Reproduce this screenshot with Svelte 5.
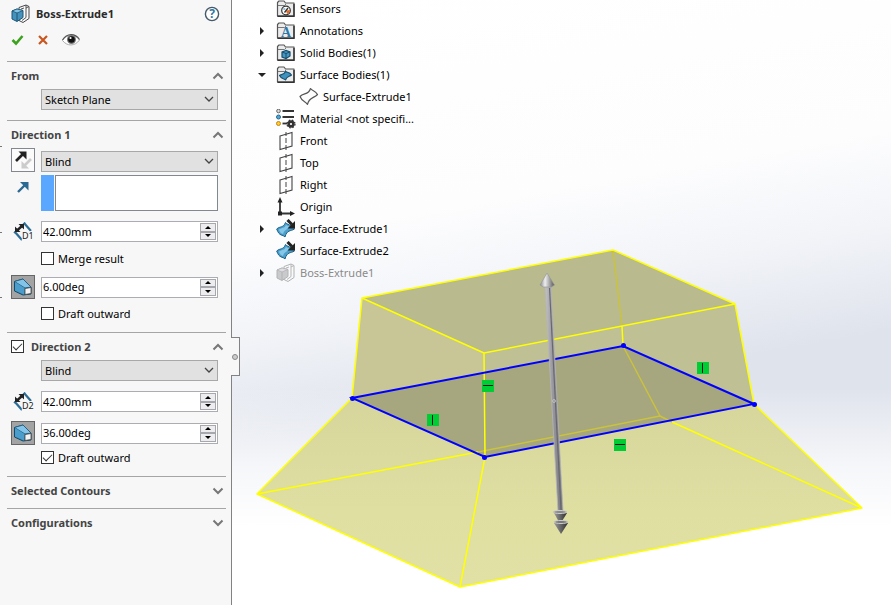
<script>
  const features = [
    { kind: 'sensor', label: 'Sensors' },
    { kind: 'note', label: 'Annotations', arrow: 'closed' },
    { kind: 'solid', label: 'Solid Bodies(1)', arrow: 'closed' },
    { kind: 'surfaces', label: 'Surface Bodies(1)', arrow: 'open' },
    { kind: 'outline', label: 'Surface-Extrude1', child: true },
    { kind: 'material', label: 'Material <not specifi...' },
    { kind: 'plane', label: 'Front' },
    { kind: 'plane', label: 'Top' },
    { kind: 'plane', label: 'Right' },
    { kind: 'origin', label: 'Origin' },
    { kind: 'surface', label: 'Surface-Extrude1', arrow: 'closed' },
    { kind: 'surface', label: 'Surface-Extrude2' },
    { kind: 'boss', label: 'Boss-Extrude1', arrow: 'closed', dim: true }
  ];

  let open = $state({ from: true, d1: true, d2: true, contours: false, config: false });
  let values = $state({ depth1: '42.00mm', draft1: '6.00deg', depth2: '42.00mm', draft2: '36.00deg' });

  function step(key, delta) {
    const unit = values[key].replace(/[\d.-]/g, '');
    values[key] = (parseFloat(values[key]) + delta).toFixed(2) + unit;
  }
</script>

{#snippet bossIcon()}
  <svg width="20" height="20" viewBox="0 0 20 20" aria-hidden="true">
    <path d="M8 3.500l7-2.500 3 1.500v12l-6 4-4-2z" fill="#fafafa" stroke="#474747" stroke-linejoin="round" />
    <path d="M15 1v12.500l-4 3M15 4l3-1.500M10 5l3-1" fill="none" stroke="#555" />
    <path d="M1 7l5-2 6 1.500v7l-6 4-5-2.500z" fill="#4593bd" stroke="#1c5475" stroke-linejoin="round" />
    <path d="M1 7l5 2 6-2.500L6 5z" fill="#86c4e6" stroke="#1c5475" stroke-width=".8" />
    <path d="M6 9v8" stroke="#1c5475" />
  </svg>
{/snippet}

{#snippet toggle(key, label)}
  <button class="chevron" aria-label="Toggle {label}" aria-expanded={open[key]} onclick={() => (open[key] = !open[key])}>
    <svg width="12" height="8" viewBox="0 0 12 8" aria-hidden="true">
      <path d={open[key] ? 'M1.500 6.500L6 2l4.500 4.500' : 'M1.500 1.500L6 6l4.500-4.500'} fill="none" stroke="#777" stroke-width="2" />
    </svg>
  </button>
{/snippet}

{#snippet combo(id, label, options)}
  <div class="combo">
    <select {id} aria-label={label}>
      {#each options as option}<option>{option}</option>{/each}
    </select>
    <svg width="10" height="7" viewBox="0 0 10 7" aria-hidden="true"><path d="M1 1l4 4 4-4" fill="none" stroke="#444" stroke-width="1.300" /></svg>
  </div>
{/snippet}

{#snippet spin(key, label)}
  <div class="spin">
    <input type="text" aria-label={label} bind:value={values[key]} />
    <div class="steps">
      <button aria-label="Increase {label}" onclick={() => step(key, 1)}><svg width="6" height="3" viewBox="0 0 6 3"><path d="M0 3l3-3 3 3z" /></svg></button>
      <button aria-label="Decrease {label}" onclick={() => step(key, -1)}><svg width="6" height="3" viewBox="0 0 6 3"><path d="M0 0l3 3 3-3z" /></svg></button>
    </div>
  </div>
{/snippet}

{#snippet depthIcon(n)}
  <svg class="depth" width="22" height="20" viewBox="0 0 22 20" aria-hidden="true">
    <path d="M11 1l7 8M1.500 9.500L9 18" fill="none" stroke="#2d6d96" stroke-width="2.200" />
    <path d="M10 2.500l2-2M1 11l2-2" stroke="#2d6d96" stroke-width="1.500" />
    <path d="M4 8.500L9 4" stroke="#222" stroke-width="2.400" />
    <path d="M5.500 2h5.500v5.500zM2 4.500V10h5.500z" fill="#222" />
    <text x="9" y="17" font-size="9" stroke="#f7f7f7" stroke-width="2" paint-order="stroke" fill="#222">D{n}</text>
  </svg>
{/snippet}

{#snippet draftButton()}
  <button class="tool pressed" aria-label="Draft on/off">
    <svg width="20" height="20" viewBox="0 0 20 20" aria-hidden="true">
      <path d="M1.500 4.500L10 2l8 8v7l-8 1-8.500-4z" fill="#2f7faa" stroke="#164a68" stroke-linejoin="round" />
      <path d="M1.500 4.500L10 2l8 8-6 1z" fill="#83c4e8" stroke="#1c5878" stroke-width=".8" />
      <path d="M2 5l9.500 6-.5 6.500-9-4z" fill="#4b9ecb" />
      <path d="M12 11.500l6-1v6L12 17.500z" fill="#f4f4f4" stroke="#444" stroke-width=".8" />
    </svg>
  </button>
{/snippet}

{#snippet treeIcon(kind)}
  <svg width="20" height="20" viewBox="0 0 20 20" aria-hidden="true">
    {#if ['sensor', 'note', 'solid', 'surfaces'].includes(kind)}
      <path d="M1.500 17V3.500L3 2h5l1.500 2H18v13z" fill="#ececec" stroke="#555" stroke-width="1.200" stroke-linejoin="round" />
      <path d="M2 6.500h6.500L10 5" fill="none" stroke="#777" />
      <path d="M1.500 17.300H18V5" fill="none" stroke="#333" stroke-width="1.400" />
    {/if}
    {#if kind === 'sensor'}
      <circle cx="10" cy="11.500" r="4.300" fill="#fff" stroke="#333" stroke-width="1.200" />
      <path d="M10 11.500l4-.5a4.300 4.300 0 0 1-3 4z" fill="#e06a28" />
      <path d="M8.500 13.500L12 9" stroke="#333" stroke-width="1.300" />
      <path d="M7.300 10h2" stroke="#2d7fb0" />
    {:else if kind === 'note'}
      <text x="10" y="16" text-anchor="middle" font-family="Liberation Serif, serif" font-size="14" font-weight="700" fill="#2f79a8">A</text>
    {:else if kind === 'solid'}
      <path d="M6 9l4-1.500L14 9v4l-4 2.500L6 14z" fill="#4797c2" stroke="#174f6e" stroke-width="1.200" />
      <path d="M6 9l4 1.500L14 9M10 10.500v5" fill="none" stroke="#174f6e" />
    {:else if kind === 'surfaces'}
      <path d="M3.500 10.500C5 9 8 10.500 9.500 6.500c1.500 1.200 4 .3 6 3.500-2 2-4.500.5-6 5-1.500-2-4-.5-6-4.500z" fill="#3e93c1" stroke="#174f6e" stroke-width="1.100" stroke-linejoin="round" />
    {:else if kind === 'outline'}
      <path d="M1 9.500C4.500 5.500 9.500 8.500 11.500 1.500c2 3 4.500 1.500 7 6C15 11.500 10 10 8.500 17.500 6.500 14 3.500 15.500 1 9.500z" fill="#fdfdfd" stroke="#555" stroke-width="1.200" stroke-linejoin="round" />
    {:else if kind === 'material'}
      <path d="M6.500 2H18M6.500 8H18" stroke="#333" stroke-width="1.800" />
      <path d="M6.500 14.500H11" stroke="#333" stroke-width="1.800" />
      <circle cx="2.500" cy="2" r="1.800" fill="#ddd" stroke="#666" />
      <circle cx="2.500" cy="8" r="2" fill="#4ba7dc" stroke="#28688e" />
      <circle cx="2.500" cy="14.500" r="2" fill="#ffd11d" stroke="#c2801e" />
      <circle cx="15" cy="15" r="2.400" fill="#fff" stroke="#333" stroke-width="2.600" />
      <circle cx="15" cy="15" r="4" fill="none" stroke="#333" stroke-width="1.200" stroke-dasharray="1.600 1.600" />
    {:else if kind === 'plane'}
      <path d="M4 5l12-3.500v13.500L4 18.500z" fill="none" stroke="#444" stroke-width="1.100" /><path d="M10 1v4M10 7v5M10 14v5" stroke="#444" />
    {:else if kind === 'origin'}
      <path d="M4 4v12.500h12" fill="none" stroke="#333" stroke-width="1.800" />
      <path d="M1.500 5.500L4 0l2.500 5.500zM14 14l5 2.500-5 2.500zM2 14.500h4v4H2z" fill="#222" />
    {:else if kind === 'surface'}
      <path d="M.7 10C4 7 7.500 9 9.500 3.500c2 2.500 4.500 1.500 9 6.500-4 2.500-7.500.5-9.500 8-2.500-3-5.500 0-8.300-8z" fill="#4a9fcd" stroke="#1e6186" stroke-linejoin="round" />
      <path d="M3 10.500c3-2 5.500-1 7-4.500l3 1.500c-1.500 4-4.500 2.500-6 7.500-1.500-.5-3-1-4-4.500z" fill="#86c6e6" />
      <path d="M11.500 1L16 5.500" stroke="#222" stroke-width="3" />
      <path d="M19 2v7.500h-7.500z" fill="#222" />
    {/if}
  </svg>
{/snippet}

<main>
  <aside class="panel">
    <i class="tick t1"></i><i class="tick t2"></i><i class="tick t3"></i>
    <header>
      <div class="title">
        {@render bossIcon()}
        <h1>Boss-Extrude1</h1>
        <button class="plain help" aria-label="Help">
          <svg width="16" height="16" viewBox="0 0 16 16">
            <circle cx="8" cy="8" r="6.600" fill="#fff" stroke="#455a68" stroke-width="1.400" />
            <text x="8" y="12" text-anchor="middle" font-size="12" font-weight="700" fill="#2d77a5">?</text>
          </svg>
        </button>
      </div>
      <div class="actions">
        <button class="plain" aria-label="OK"><svg width="13" height="12" viewBox="0 0 13 12"><path d="M1.500 6l3.500 3.500L11.500 2" fill="none" stroke="#3da21f" stroke-width="2.600" /></svg></button>
        <button class="plain" aria-label="Cancel"><svg width="10" height="10" viewBox="0 0 10 10"><path d="M1 1l8 8M9 1L1 9" stroke="#c9551f" stroke-width="2.200" /></svg></button>
        <button class="plain" aria-label="Preview">
          <svg width="18" height="14" viewBox="0 0 18 14">
            <path d="M.5 7.500C5 .5 13 .5 17.500 7 13 13.500 5 13.500.5 7.500z" fill="#fff" stroke="#aaa" />
            <path d="M.5 7C5 0 13 0 17.500 6.500" fill="none" stroke="#555" stroke-width="1.200" />
            <circle cx="9.500" cy="6.500" r="4.500" fill="#777" /><circle cx="9.500" cy="6.500" r="3.300" fill="#111" /><circle cx="8.500" cy="5" r="1.100" fill="#fff" />
          </svg>
        </button>
      </div>
    </header>

    <section>
      <div class="head"><h2>From</h2>{@render toggle('from', 'From')}</div>
      {#if open.from}
        <div class="body tight"><div class="row"><span></span>{@render combo('from', 'Start condition', ['Sketch Plane', 'Offset'])}</div></div>
      {/if}
    </section>

    <section>
      <div class="head"><h2>Direction 1</h2>{@render toggle('d1', 'Direction 1')}</div>
      {#if open.d1}
        <div class="body">
          <div class="row end">
            <button class="tool" aria-label="Reverse direction">
              <svg width="20" height="20" viewBox="0 0 20 20">
                <path d="M18 9l-7 7" stroke="#ccc" stroke-width="2.600" /><path d="M8.500 11v7.500H16z" fill="#ccc" />
                <path d="M3 11l7-7" stroke="#222" stroke-width="2.600" /><path d="M5.500 1.500H13.500V9.500z" fill="#222" />
              </svg>
            </button>
            {@render combo('end1', 'End condition 1', ['Blind', 'Through All'])}
          </div>
          <div class="row vector">
            <svg width="14" height="14" viewBox="0 0 14 14" aria-hidden="true"><path d="M2 12l7-7" stroke="#2b6a92" stroke-width="2.400" /><path d="M4 2h8.500v8.500z" fill="#2b6a92" /></svg>
            <div class="pick"><i></i><input type="text" aria-label="Direction of extrusion" /></div>
          </div>
          <div class="row g10">{@render depthIcon(1)}{@render spin('depth1', 'Depth 1')}</div>
          <div class="row g10"><span></span><label><input type="checkbox" />Merge result</label></div>
          <div class="row g10">{@render draftButton()}{@render spin('draft1', 'Draft angle 1')}</div>
          <div class="row g8"><span></span><label><input type="checkbox" />Draft outward</label></div>
        </div>
      {/if}
    </section>

    <section>
      <div class="head"><input id="dir2" type="checkbox" checked /><h2><label for="dir2">Direction 2</label></h2>{@render toggle('d2', 'Direction 2')}</div>
      {#if open.d2}
        <div class="body">
          <div class="row"><span></span>{@render combo('end2', 'End condition 2', ['Blind', 'Through All'])}</div>
          <div class="row g10">{@render depthIcon(2)}{@render spin('depth2', 'Depth 2')}</div>
          <div class="row g9">{@render draftButton()}{@render spin('draft2', 'Draft angle 2')}</div>
          <div class="row g6"><span></span><label><input type="checkbox" checked />Draft outward</label></div>
        </div>
      {/if}
    </section>

    <section class="closed"><div class="head"><h2>Selected Contours</h2>{@render toggle('contours', 'Selected Contours')}</div></section>
    <section class="closed"><div class="head"><h2>Configurations</h2>{@render toggle('config', 'Configurations')}</div></section>
    <button class="grip" aria-label="Collapse panel"><i></i></button>
  </aside>

  <div class="view">
    <svg class="scene" viewBox="232 0 659 605" preserveAspectRatio="xMinYMin meet" role="img" aria-label="Extrude preview">
      <defs>
        <linearGradient id="shaft" x1="0" x2="1"><stop offset="0" stop-color="#c4c4c8" /><stop offset=".4" stop-color="#9a9aa0" /><stop offset="1" stop-color="#75757a" /></linearGradient>
        <linearGradient id="cone" x1="0" x2="1"><stop offset="0" stop-color="#888" /><stop offset=".35" stop-color="#eee" /><stop offset="1" stop-color="#555" /></linearGradient>
        <linearGradient id="dark" x1="0" x2="1"><stop offset="0" stop-color="#999" /><stop offset=".5" stop-color="#666" /><stop offset="1" stop-color="#2c2c2c" /></linearGradient>
        <linearGradient id="skirt" x1="0" x2="0" y1="0" y2="1"><stop offset="0" stop-color="#d6d69c" /><stop offset=".6" stop-color="#dfdfa2" /><stop offset="1" stop-color="#e2e1a5" /></linearGradient>
      </defs>
      <path d="M257 494L352 398 754 404 862 508 460 587z" fill="url(#skirt)" />
      <path d="M362 298L484 353 485 457 352 398z" fill="#c8c696" />
      <path d="M484 353L735 304 754 404 485 457z" fill="#bfc093" />
      <path d="M362 298L613 250 735 304 484 353z" fill="#b9ba8e" />
      <path d="M352 398L623 346 754 404 485 457z" fill="#a6a67f" />
      <g fill="none" stroke="#cbc33c" stroke-width="1.500">
        <path d="M613 250l9 76M623 346l37 70M660 416l12 6M660 416L478 452" />
      </g>
      <g fill="none" stroke="#ff0" stroke-width="1.500" stroke-linejoin="round">
        <path d="M362 298L613 250 735 304 484 353zM362 298l-10 100M735 304l19 100M484 353l1 104M622 326l1 20" />
        <path d="M352 398l-95 96 203 93 402-79-108-104M485 457l-25 130M672 422l190 86M478 452l-221 42" />
      </g>
      <path d="M352 398L623 346 754 404 485 457z" fill="none" stroke="#00f" stroke-width="2" />
      <g fill="#00f"><circle cx="352.500" cy="398.500" r="2.500" /><circle cx="623.500" cy="345.500" r="2.500" /><circle cx="754.500" cy="404.500" r="2.500" /><circle cx="484.500" cy="457.500" r="2.500" /></g>
      <g>
        <path d="M545 286h6l12 225h-5z" fill="url(#shaft)" stroke="#b5b5bb" stroke-width=".8" />
        <path d="M549.500 288l11.500 222" stroke="#66666c" stroke-width="1.100" />
        <path d="M547 273l7.500 12-3 2h-8l-3.500-2z" fill="url(#cone)" stroke="#999" stroke-width=".7" />
        <path d="M554 513h13l-5.500 9h-2.500z" fill="url(#dark)" /><ellipse cx="560" cy="512" rx="7" ry="1.500" fill="#888" stroke="#ccc" />
        <path d="M554 523h14l-7 11z" fill="url(#dark)" /><ellipse cx="561" cy="522" rx="7" ry="1.500" fill="#777" stroke="#ccc" />
        <circle cx="554" cy="401" r="1.500" fill="#999" stroke="#ccc" stroke-width=".7" />
      </g>
      <path d="M482 380h12v12h-12zM427 414h12v12h-12zM697 362h12v12h-12zM614 439h12v12h-12z" fill="#0c3" />
      <path d="M483 385.500h10M615 444.500h10M432.500 415v10M702.500 363v10" stroke="#111" />
    </svg>
    <ul class="tree">
      {#each features as item}
        <li class:child={item.child} class:dim={item.dim}>
          <span class="arrow">
            {#if item.arrow}
              <svg width="8" height="8" viewBox="0 0 8 8" aria-hidden="true"><path d={item.arrow === 'open' ? 'M0 2h8L4 6z' : 'M2 0l4 4-4 4z'} fill="#222" /></svg>
            {/if}
          </span>
          {#if item.kind === 'boss'}{@render bossIcon()}{:else}{@render treeIcon(item.kind)}{/if}
          <span>{item.label}</span>
        </li>
      {/each}
    </ul>
  </div>
</main>

<style>
  :global(body) { margin: 0; }
  main {
    display: flex;
    min-height: 100vh;
    font: 11px/16px "Noto Sans", "Open Sans", sans-serif;
    color: #000;
  }
  button, input, select { font: inherit; color: inherit; box-sizing: border-box; margin: 0; }
  svg { display: block; flex: none; }
  h1, h2 { margin: 0; font-size: 11px; font-weight: 700; line-height: 16px; }
  h1 { color: #2b2b2b; }
  h2 { flex: 1; color: #444; }
  .panel {
    position: relative;
    z-index: 1;
    box-sizing: border-box;
    width: 232px;
    flex: none;
    padding: 0 5px 0 7px;
    background: #f7f7f7;
    border-right: 1px solid #828282;
  }
  .tick { position: absolute; left: 0; width: 2px; height: 1px; background: #777; }
  .t1 { top: 146px; }
  .t2 { top: 232px; }
  .t3 { top: 297px; }
  header { padding: 3px 0 5px 4px; }
  .title { display: flex; align-items: center; height: 21px; gap: 5px; }
  .help { margin-left: auto; margin-right: 6px; }
  .actions { display: flex; align-items: center; height: 32px; gap: 14px; }
  .plain, .chevron { border: 0; padding: 0; background: none; }
  section { border-top: 1px solid #a5a5a5; }
  .head { display: flex; align-items: center; height: 27px; padding: 0 2px 0 4px; }
  .head input { margin-right: 7px; }
  .body { padding: 0 8px 12px 4px; }
  .body.tight { padding-bottom: 10px; }
  .closed { padding-bottom: 4px; }
  .row { display: grid; grid-template-columns: 24px minmax(0, 1fr); column-gap: 6px; align-items: center; }
  .row.end { align-items: end; }
  .vector { margin-top: 3px; align-items: start; }
  .vector > svg { margin: 5px 0 0 5px; }
  .g10 { margin-top: 10px; }
  .g9 { margin-top: 9px; }
  .g8 { margin-top: 8px; }
  .g6 { margin-top: 6px; }
  .depth { margin-left: 2px; }
  .row:has(.depth) { height: 21px; }
  .combo { position: relative; height: 21px; }
  select {
    display: block;
    appearance: none;
    width: 100%;
    height: 21px;
    padding: 0 18px 0 3px;
    border: 1px solid #a8a8a8;
    border-radius: 0;
    background: #e1e1e1;
  }
  .combo svg { position: absolute; right: 4px; top: 7px; pointer-events: none; }
  .tool {
    display: grid;
    place-items: center;
    width: 24px;
    height: 24px;
    padding: 0;
    border: 1px solid #828790;
    background: #fbfbfb;
  }
  .pressed { background: #a3a3a3; border-color: #666; }
  .pick { display: flex; height: 36px; gap: 1px; }
  .pick i { width: 13px; background: #59a7ff; }
  .pick input { flex: 1; min-width: 0; border: 1px solid #828790; background: #fff; }
  .spin { display: flex; box-sizing: border-box; height: 21px; padding: 1px; border: 1px solid #abadb3; background: #fff; }
  .spin input { flex: 1; min-width: 0; border: 0; padding: 0; background: none; }
  .steps { display: grid; grid-template-rows: 1fr 1fr; width: 16px; }
  .steps button { display: grid; place-items: center; padding: 0; border: 1px solid #a6a8ae; background: #ededf0; min-height: 0; }
  label { display: flex; align-items: center; gap: 4px; height: 13px; }
  h2 label { display: inline; }
  input[type='checkbox'] {
    appearance: none;
    width: 13px;
    height: 13px;
    flex: none;
    border: 1px solid #333;
    background: #fff;
    display: grid;
    place-items: center;
  }
  input[type='checkbox']:checked::after {
    content: '';
    width: 8px;
    height: 4px;
    box-sizing: content-box;
    border: solid #333;
    border-width: 0 0 1px 1px;
    transform: translateY(-1px) rotate(-45deg);
  }
  .grip {
    position: absolute;
    left: 100%;
    top: 337px;
    width: 9px;
    height: 39px;
    padding: 0;
    border: 1px solid #828282;
    border-left: 0;
    background: #f7f7f7;
    display: grid;
    place-items: center;
  }
  .grip i { width: 4px; height: 4px; border: 1px solid #888; border-radius: 50%; background: #ccc; }
  .view {
    position: relative;
    flex: 1;
    min-width: 0;
    background:
      linear-gradient(180deg, #fff0 64%, #ffffffb3 77%, #fff 87%),
      linear-gradient(170deg, #fff 0%, #fdfdfe 34%, #f2f4f8 47%, #dfe3ec 62%, #dfe3ec 100%);
  }
  .scene { position: absolute; inset: 0; width: 100%; height: 100%; }
  .tree { position: relative; list-style: none; margin: -2px 0 0; padding: 0 0 0 26px; }
  .tree li { display: flex; align-items: center; height: 22px; }
  .tree li > svg { margin-right: 4px; }
  .tree .child { padding-left: 23px; }
  .arrow { width: 18px; flex: none; }
  .dim > svg { filter: grayscale(1); opacity: .4; }
  .dim > span:last-child { color: #8a8a8a; }
</style>
